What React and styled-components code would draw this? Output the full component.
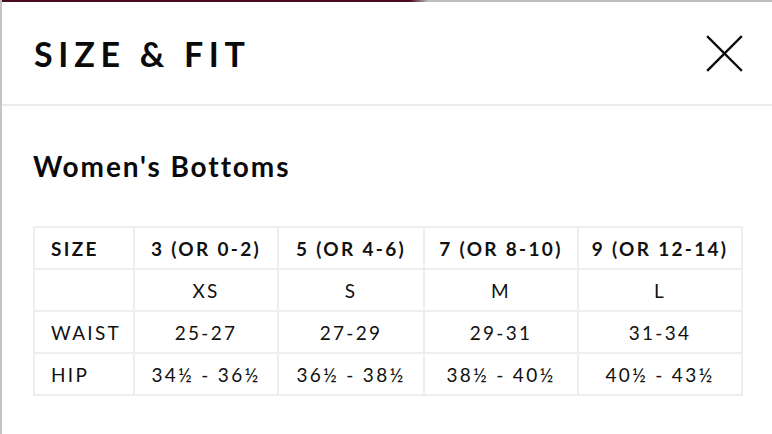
import React from "react";
import styled, { createGlobalStyle } from "styled-components";

const GlobalStyle = createGlobalStyle`
  html, body {
    margin: 0;
    padding: 0;
    background: #fff;
  }
  body {
    font-family: "Lato", "Liberation Sans", sans-serif;
    color: #111;
  }
`;

const Screen = styled.div`
  width: 772px;
  height: 434px;
  display: flex;
  flex-direction: column;
  overflow: hidden;
`;

const TopStrip = styled.div`
  height: 2px;
  flex-shrink: 0;
  background: linear-gradient(
    to right,
    #c4c4c4 0,
    #c4c4c4 2px,
    #4a0a1e 2px,
    #4a0a1e 410px,
    #bcbcbc 428px,
    #bcbcbc 100%
  );
`;

const Body = styled.div`
  flex: 1;
  display: flex;
  border-left: 2px solid #c4c4c4;
`;

const Modal = styled.div`
  flex: 1;
  display: flex;
  flex-direction: column;
  background: #fff;
`;

const Header = styled.div`
  height: 102px;
  display: flex;
  align-items: center;
  justify-content: space-between;
  padding: 0 29px 0 32px;
  border-bottom: 2px solid #ebebeb;
`;

const Title = styled.h1`
  margin: 0;
  font-size: 34px;
  font-weight: 700;
  letter-spacing: 5.7px;
  text-transform: uppercase;
  color: #0a0a0a;
`;

const CloseButton = styled.button`
  border: 0;
  background: none;
  padding: 0;
  width: 37px;
  height: 37px;
  display: flex;
  align-items: center;
  justify-content: center;
  cursor: pointer;
`;

const Content = styled.div`
  padding: 43px 0 0 31px;
`;

const SectionTitle = styled.h2`
  margin: 0 0 43px;
  font-size: 28px;
  font-weight: 700;
  letter-spacing: 1.9px;
  color: #0a0a0a;
`;

const Table = styled.table`
  border-collapse: collapse;
  table-layout: fixed;
  width: 709px;
  font-size: 19px;
  letter-spacing: 2.3px;
`;

const Col = styled.col`
  width: ${(p) => p.$w}px;
`;

const Cell = styled.td`
  border: 2px solid #eeeeee;
  height: 40px;
  padding: ${(p) => (p.$label ? "0 0 0 16px" : "0")};
  white-space: nowrap;
  text-align: ${(p) => (p.$label ? "left" : "center")};
  font-weight: ${(p) => (p.$head ? 700 : 400)};
`;

const widths = [100, 144, 146, 154, 164];

const rows = [
  { head: true, cells: ["SIZE", "3 (OR 0-2)", "5 (OR 4-6)", "7 (OR 8-10)", "9 (OR 12-14)"] },
  { cells: ["", "XS", "S", "M", "L"] },
  { cells: ["WAIST", "25-27", "27-29", "29-31", "31-34"] },
  { cells: ["HIP", "34½ - 36½", "36½ - 38½", "38½ - 40½", "40½ - 43½"] },
];

function CloseIcon() {
  return (
    <svg width="37" height="37" viewBox="0 0 37 37">
      <path d="M2 2 L35 35 M35 2 L2 35" stroke="#0a0a0a" strokeWidth="2.4" strokeLinecap="square" />
    </svg>
  );
}

export default function App() {
  return (
    <Screen>
      <GlobalStyle />
      <TopStrip />
      <Body>
        <Modal>
          <Header>
            <Title>Size &amp; Fit</Title>
            <CloseButton aria-label="Close">
              <CloseIcon />
            </CloseButton>
          </Header>
          <Content>
            <SectionTitle>Women's Bottoms</SectionTitle>
            <Table>
              <colgroup>
                {widths.map((w, i) => (
                  <Col key={i} $w={w} />
                ))}
              </colgroup>
              <tbody>
                {rows.map((row, i) => (
                  <tr key={i}>
                    {row.cells.map((c, j) => (
                      <Cell key={j} $head={row.head} $label={j === 0}>
                        {c}
                      </Cell>
                    ))}
                  </tr>
                ))}
              </tbody>
            </Table>
          </Content>
        </Modal>
      </Body>
    </Screen>
  );
}
